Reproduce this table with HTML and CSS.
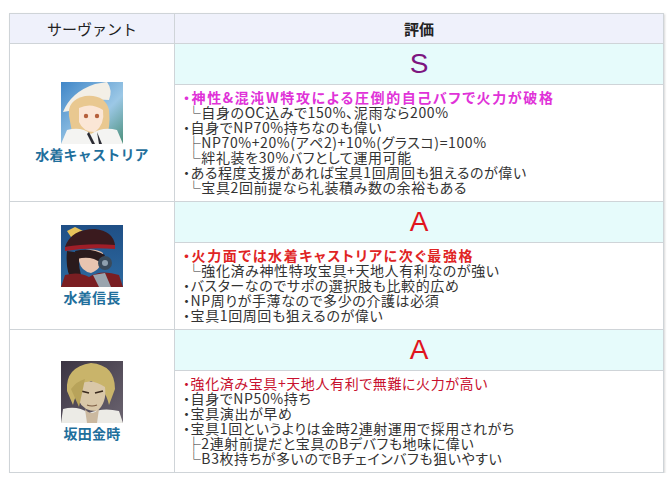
FILE: index.html
```html
<!DOCTYPE html>
<html lang="ja">
<head>
<meta charset="utf-8">
<title>評価</title>
<link rel="stylesheet" href="styles.css">
</head>
<body>
<table class="tier">
  <thead>
    <tr><th class="col-servant">サーヴァント</th><th class="col-eval">評価</th></tr>
  </thead>
  <tbody>
    <tr>
      <td class="servant" rowspan="2">
        <div class="servant-box">
          <svg class="thumb" viewBox="0 0 62 62" width="62" height="62">
            <defs>
              <linearGradient id="sky1" x1="0" y1="0" x2="1" y2="1">
                <stop offset="0" stop-color="#3f86c8"/><stop offset="0.6" stop-color="#9cc8e6"/><stop offset="1" stop-color="#4a8f7a"/>
              </linearGradient>
            </defs>
            <rect width="62" height="62" fill="url(#sky1)"/>
            <path d="M2 30 Q10 10 34 2 L46 0 Q52 8 48 18 Q30 16 14 28 Z" fill="#f3efe6"/>
            <path d="M8 34 Q6 18 24 14 Q44 12 48 28 Q50 46 44 58 L14 60 Q10 48 8 34 Z" fill="#e9c890"/>
            <path d="M18 26 Q30 20 42 28 Q44 42 34 50 Q22 50 18 40 Z" fill="#fbe6d6"/>
            <circle cx="25" cy="34" r="2.2" fill="#b6603c"/>
            <circle cx="36" cy="34" r="2.2" fill="#b6603c"/>
            <path d="M0 62 L6 48 Q20 44 30 52 Q42 44 56 48 L62 62 Z" fill="#f4f4f2"/>
            <path d="M28 50 L34 62 L31 62 L26 52 Z" fill="#2b2b33"/>
            <path d="M36 50 L41 62 L38 62 Z" fill="#2b2b33"/>
          </svg>
          <div class="name">水着キャストリア</div>
        </div>
      </td>
      <td class="grade grade-s">S</td>
    </tr>
    <tr>
      <td class="notes">
        <div class="hl-magenta">・神性&amp;混沌W特攻による圧倒的自己バフで火力が破格</div>
        <div>&nbsp;└自身のOC込みで150%、泥雨なら200%</div>
        <div>・自身でNP70%持ちなのも偉い</div>
        <div>&nbsp;├NP70%+20%(アペ2)+10%(グラスコ)=100%</div>
        <div>&nbsp;└絆礼装を30%バフとして運用可能</div>
        <div>・ある程度支援があれば宝具1回周回も狙えるのが偉い</div>
        <div>&nbsp;└宝具2回前提なら礼装積み数の余裕もある</div>
      </td>
    </tr>
    <tr>
      <td class="servant" rowspan="2">
        <div class="servant-box">
          <svg class="thumb" viewBox="0 0 62 62" width="62" height="62">
            <defs>
              <linearGradient id="sky2" x1="0" y1="0" x2="0" y2="1">
                <stop offset="0" stop-color="#1f4f86"/><stop offset="1" stop-color="#2d6aa0"/>
              </linearGradient>
            </defs>
            <rect width="62" height="62" fill="url(#sky2)"/>
            <path d="M6 6 L14 2 L22 6 L18 12 L10 12 Z" fill="#e8c25a"/>
            <path d="M4 22 Q10 4 34 4 Q52 6 54 20 L40 22 Q22 20 4 22 Z" fill="#3a1a1e"/>
            <path d="M4 22 Q26 18 54 20 L54 24 Q28 22 4 26 Z" fill="#a01e28"/>
            <path d="M6 26 Q4 46 12 58 L20 50 Q16 36 20 28 Z" fill="#2a1a1c"/>
            <path d="M18 26 Q34 22 42 28 Q42 44 30 48 Q20 46 18 36 Z" fill="#e8c4b0"/>
            <path d="M14 26 Q30 22 44 30 L40 38 Q30 30 16 34 Z" fill="#2a1a1c"/>
            <circle cx="44" cy="38" r="7" fill="#3a4a5a"/>
            <circle cx="44" cy="38" r="3" fill="#8fa0ae"/>
            <path d="M0 62 L4 50 Q18 46 28 52 Q40 44 58 50 L62 62 Z" fill="#7a1e22"/>
            <path d="M32 50 L44 48 L50 62 L38 62 Z" fill="#9aa4ae"/>
          </svg>
          <div class="name">水着信長</div>
        </div>
      </td>
      <td class="grade grade-a">A</td>
    </tr>
    <tr>
      <td class="notes">
        <div class="hl-red">・火力面では水着キャストリアに次ぐ最強格</div>
        <div>&nbsp;└強化済み神性特攻宝具+天地人有利なのが強い</div>
        <div>・バスターなのでサポの選択肢も比較的広め</div>
        <div>・NP周りが手薄なので多少の介護は必須</div>
        <div>・宝具1回周回も狙えるのが偉い</div>
      </td>
    </tr>
    <tr>
      <td class="servant" rowspan="2">
        <div class="servant-box">
          <svg class="thumb" viewBox="0 0 62 62" width="62" height="62">
            <defs>
              <linearGradient id="sky3" x1="0" y1="0" x2="1" y2="1">
                <stop offset="0" stop-color="#3b3442"/><stop offset="1" stop-color="#6b6470"/>
              </linearGradient>
            </defs>
            <rect width="62" height="62" fill="url(#sky3)"/>
            <path d="M6 30 Q4 6 30 2 Q54 4 54 28 L48 44 Q44 26 30 20 Q16 26 12 44 Z" fill="#c9b46a"/>
            <path d="M16 24 Q30 16 44 26 Q46 42 36 50 Q22 50 18 40 Z" fill="#d9c7a8"/>
            <path d="M20 30 L28 32 M34 32 L42 30" stroke="#3a2a1e" stroke-width="1.6"/>
            <path d="M26 44 Q31 46 36 44" stroke="#7a5a40" stroke-width="1.2" fill="none"/>
            <path d="M10 28 Q16 20 24 18 L18 46 Z" fill="#b8a35a"/>
            <path d="M0 62 L2 48 Q16 44 28 52 Q42 46 58 50 L62 62 Z" fill="#ecebe6"/>
            <path d="M24 48 Q30 56 38 48 L36 62 L26 62 Z" fill="#cbb9a0"/>
          </svg>
          <div class="name">坂田金時</div>
        </div>
      </td>
      <td class="grade grade-a">A</td>
    </tr>
    <tr>
      <td class="notes">
        <div class="hl-crimson">・強化済み宝具+天地人有利で無難に火力が高い</div>
        <div>・自身でNP50%持ち</div>
        <div>・宝具演出が早め</div>
        <div>・宝具1回というよりは金時2連射運用で採用されがち</div>
        <div>&nbsp;├2連射前提だと宝具のBデバフも地味に偉い</div>
        <div>&nbsp;└B3枚持ちが多いのでBチェインバフも狙いやすい</div>
      </td>
    </tr>
  </tbody>
</table>
</body>
</html>
```

FILE: styles.css
```css
html, body {
  margin: 0;
  padding: 0;
  background: #ffffff;
}

body {
  padding: 13px 0 0 9px;
  font-family: "Noto Sans CJK JP", "Noto Sans", sans-serif;
  color: #333333;
}

.tier {
  border-collapse: collapse;
  width: 655px;
  table-layout: fixed;
  box-shadow: 1px 1px 2px #d8d8d8;
}

.tier th,
.tier td {
  border: 1px solid #cfd4d8;
  padding: 0;
}

.tier th {
  height: 29px;
  background: #eff1fb;
  font-size: 15px;
  font-weight: normal;
  color: #222222;
  text-align: center;
  vertical-align: middle;
  line-height: 29px;
}

.tier th.col-servant {
  width: 164px;
}

.tier th.col-eval {
  font-weight: bold;
}

.servant {
  text-align: center;
  vertical-align: middle;
  background: #ffffff;
}

.servant-box {
  display: flex;
  flex-direction: column;
  align-items: center;
  gap: 2px;
}

.thumb {
  display: block;
  width: 62px;
  height: 62px;
}

.name {
  font-size: 14px;
  font-weight: bold;
  color: #1f6f9c;
  letter-spacing: 0.2px;
  line-height: 17px;
}

.grade {
  height: 40px;
  background: #e6fbfb;
  text-align: center;
  vertical-align: middle;
  font-family: "Liberation Sans", Arial, sans-serif;
  font-size: 28px;
  line-height: 40px;
}

.grade-s {
  color: #7d1580;
}

.grade-a {
  color: #e0141e;
}

.tier td.notes {
  padding: 5px 6px 6px 8px;
  font-size: 14px;
  line-height: 15px;
  letter-spacing: 0.6px;
  font-feature-settings: "palt";
  vertical-align: top;
  white-space: nowrap;
}

.hl-magenta {
  color: #e032d8;
  font-weight: bold;
  letter-spacing: 1.6px;
}

.hl-red {
  color: #e02424;
  font-weight: bold;
  letter-spacing: 1.6px;
}

.hl-crimson {
  color: #c8102e;
}
```
